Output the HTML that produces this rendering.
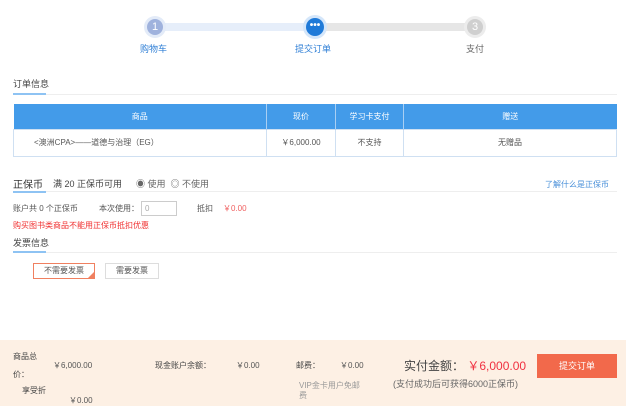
<!DOCTYPE html>
<html><head><meta charset="utf-8"><style>
*{margin:0;padding:0;box-sizing:border-box}
body{width:626px;height:406px;overflow:hidden;background:#fff;font-family:"Liberation Sans","Noto Sans CJK SC",sans-serif;font-size:9px;color:#555;position:relative}
.a{position:absolute;white-space:nowrap}
.c{border-radius:50%;text-align:center;color:#fff}
table{border-collapse:collapse;position:absolute;left:13px;top:104px;width:604px;font-size:8px}
th{background:#439be9;color:#fff;font-weight:normal;height:25px;border-right:1px solid #a9cff3}
td{height:27px;text-align:center;border:1px solid #cfe0f2;color:#555}
</style></head><body>
<div class="a" style="left:155px;top:23px;width:160px;height:8px;background:#e6eefa"></div>
<div class="a" style="left:315px;top:23px;width:160px;height:8px;background:#e6e6e6"></div>
<div class="a c" style="left:144px;top:16px;width:22px;height:22px;background:#e3ebf8"></div>
<div class="a c" style="left:147px;top:19px;width:16px;height:16px;background:#9fb2dd;line-height:16px;font-size:11px">1</div>
<div class="a c" style="left:303px;top:15px;width:24px;height:24px;background:#d4e6fa"></div>
<div class="a c" style="left:306px;top:18px;width:18px;height:18px;background:#1f7ad8;line-height:15px;font-size:10px;font-weight:bold">•••</div>
<div class="a c" style="left:464px;top:16px;width:22px;height:22px;background:#ececec"></div>
<div class="a c" style="left:467px;top:19px;width:16px;height:16px;background:#cfcfcf;line-height:16px;font-size:11px">3</div>
<div class="a" style="left:140px;top:42px;color:#2f7fd6">购物车</div>
<div class="a" style="left:295px;top:42px;color:#2f7fd6">提交订单</div>
<div class="a" style="left:466px;top:42px;color:#666">支付</div>

<div class="a" style="left:13px;top:77px;color:#444">订单信息</div>
<div class="a" style="left:13px;top:94px;width:604px;height:1px;background:#eee"></div>
<div class="a" style="left:13px;top:93px;width:33px;height:2px;background:#8ec3f3"></div>
<table><tr><th style="width:253px">商品</th><th style="width:69px">现价</th><th style="width:68px">学习卡支付</th><th style="border:none">赠送</th></tr>
<tr><td style="text-align:left;padding-left:20px">&lt;澳洲CPA&gt;——道德与治理（EG）</td><td>￥6,000.00</td><td>不支持</td><td>无赠品</td></tr></table>

<div class="a" style="left:13px;top:176px;color:#333;font-size:10px">正保币</div>
<div class="a" style="left:53px;top:177px;color:#444">满 20 正保币可用</div>
<div class="a" style="left:136px;top:177px;color:#666">◉ 使用 &nbsp;◎ 不使用</div>
<div class="a" style="left:545px;top:179px;color:#4a90d9;font-size:8px">了解什么是正保币</div>
<div class="a" style="left:13px;top:191px;width:604px;height:1px;background:#eee"></div>
<div class="a" style="left:13px;top:191px;width:33px;height:2px;background:#8ec3f3"></div>
<div class="a" style="left:13px;top:203px;font-size:8px">账户共 0 个正保币</div>
<div class="a" style="left:99px;top:203px;font-size:8px">本次使用：</div>
<div class="a" style="left:141px;top:201px;width:36px;height:15px;border:1px solid #ccc;font-size:8px;color:#aaa;padding:2px 3px">0</div>
<div class="a" style="left:197px;top:203px;font-size:8px">抵扣</div>
<div class="a" style="left:223px;top:203px;font-size:8px;color:#f06060">￥0.00</div>
<div class="a" style="left:13px;top:220px;font-size:8px;color:#f03030">购买图书类商品不能用正保币抵扣优惠</div>
<div class="a" style="left:13px;top:236px;color:#444">发票信息</div>
<div class="a" style="left:13px;top:252px;width:604px;height:1px;background:#eee"></div>
<div class="a" style="left:13px;top:251px;width:33px;height:2px;background:#8ec3f3"></div>
<div class="a" style="left:33px;top:263px;width:62px;height:16px;border:1px solid #f08060;font-size:8px;text-align:center;line-height:14px">不需要发票</div>
<div class="a" style="left:88px;top:272px;width:0;height:0;border-left:6px solid transparent;border-bottom:6px solid #f08060"></div>
<div class="a" style="left:105px;top:263px;width:54px;height:16px;border:1px solid #ddd;font-size:8px;text-align:center;line-height:14px">需要发票</div>

<div class="a" style="left:0;top:340px;width:626px;height:66px;background:#fdf0e4"></div>
<div class="a" style="left:13px;top:351px;font-size:8px;color:#444">商品总</div>
<div class="a" style="left:13px;top:369px;font-size:8px;color:#444">价：</div>
<div class="a" style="left:53px;top:360px;font-size:8px">￥6,000.00</div>
<div class="a" style="left:22px;top:385px;font-size:8px;color:#444">享受折</div>
<div class="a" style="left:69px;top:395px;font-size:8px">￥0.00</div>
<div class="a" style="left:155px;top:360px;font-size:8px;color:#444">现金账户余额：</div>
<div class="a" style="left:236px;top:360px;font-size:8px">￥0.00</div>
<div class="a" style="left:296px;top:360px;font-size:8px;color:#444">邮费：</div>
<div class="a" style="left:340px;top:360px;font-size:8px">￥0.00</div>
<div class="a" style="left:299px;top:381px;font-size:8px;color:#999;line-height:10px">VIP金卡用户免邮<br>费</div>
<div class="a" style="left:404px;top:357px;font-size:12px;color:#444">实付金额： <span style="color:#f03040">￥6,000.00</span></div>
<div class="a" style="left:393px;top:377px;font-size:9px;color:#666">(支付成功后可获得6000正保币)</div>
<div class="a" style="left:537px;top:354px;width:80px;height:24px;background:#f2694b;color:#fff;text-align:center;line-height:24px;font-size:9px">提交订单</div>
</body></html>
